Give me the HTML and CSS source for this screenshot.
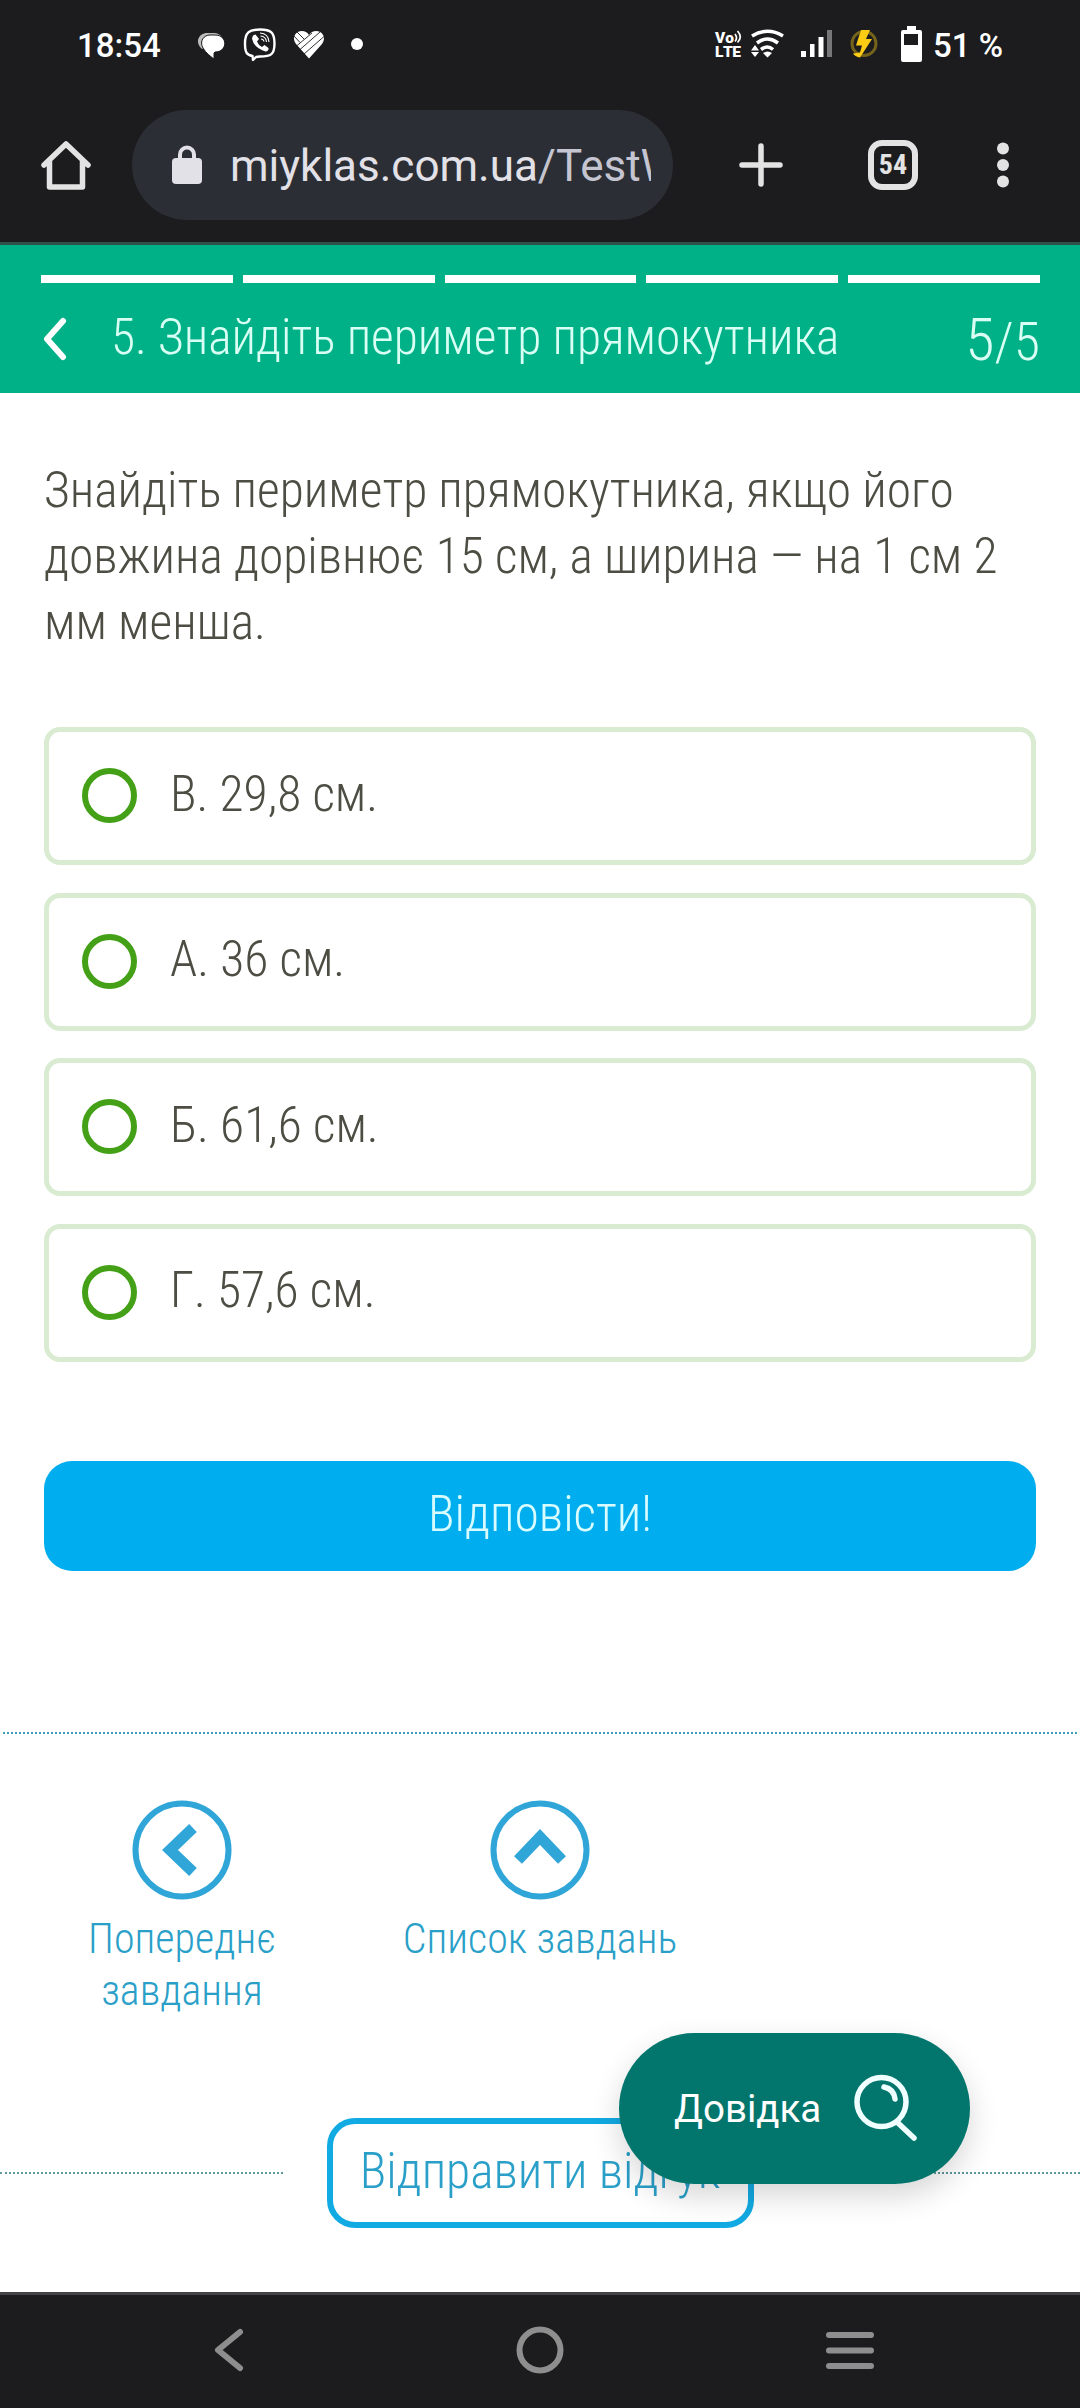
FILE: index.html
```html
<!DOCTYPE html>
<html lang="uk">
  <head>
    <meta charset="UTF-8" />
    <meta name="viewport" content="width=device-width, initial-scale=1.0" />
    <title>5. Знайдіть периметр прямокутника</title>
    <link rel="stylesheet" href="styles.css">
  </head>
  <body>
    <div class="status-bar">
      <span class="time">18:54</span>
      <svg class="notifications" width="180" height="40" viewBox="190 24 180 40">
        <path fill="#bbb" d="M202 49c-8-7-3-16 5-16h6c5 0 8 2 9 5z" />
        <path fill="#fff" stroke="#1c1c1e" stroke-width="1" d="M210 35h5c13 0 13 17 0 17l-1 1v6c-4-3-8-6-11-11-4-7 1-13 7-13z" />
        <path fill="none" stroke="#fff" stroke-width="2.400" stroke-linejoin="round" d="M260 29.500c11 0 14.500 3 14.500 14S271 56.500 260 56.500l-4 .5-3 3-.5-4c-6-1-7.500-4-7.500-12.500 0-11 4-14 15-14z" />
        <path fill="#fff" d="M253 35.500l2.500-1 3.500 4.500-2 2.500q1.500 4 5 5.500l2.500-2 4 3q.500 3-3 3.500-12-4-13.500-13z" />
        <path fill="none" stroke="#fff" stroke-width="1.100" d="M260 33q8.500.500 9 9M260.500 36q5.500.500 6 6M261 39q2.500 0 3 2.500" />
        <path fill="#fff" d="M309 58.500L296 44c-5-7 0-13 6-13 3 0 5 1 7 4 2-3 4-4 7-4 6 0 11 6 6 13z" />
        <path stroke="#1c1c1e" stroke-width=".9" d="M297 32l7 7M294 36l6 6.500M296.500 46L312 33M300 49.500l20-17.500M304 54l20-17.500" />
        <circle cx="357" cy="44" r="6" fill="#fff" />
      </svg>
      <svg class="indicators" width="216" height="40" viewBox="710 24 216 40">
        <text x="715" y="42.500" class="volte" textLength="19">Vo</text>
        <path fill="none" stroke="#fff" stroke-width="1.700" d="M735 34q3 4 0 7.500M737.500 31q5.500 6 0 11.500" />
        <text x="715" y="57" class="volte" textLength="26">LTE</text>
        <g fill="none" stroke="#fff" stroke-width="3.500">
          <path d="M752 36q15.500-9.500 31 0M757 43q10.500-8 21 0M761 49.500q6.500-5 12 0" />
        </g>
        <path fill="#fff" d="M763 53q4.500-3 9 0l-4.500 4.500zM751 50.500l4-5.500 4 5.500zM751 52h8l-4 5z" />
        <path fill="#fff" d="M801 51h5v6h-5zM810 44h4.500v13H810zM818.500 37h5v20h-5z" />
        <path fill="#777" d="M827 30h5v27h-5z" />
        <circle cx="864" cy="43.500" r="12" fill="none" stroke="#74631a" stroke-width="3" />
        <path fill="#fccc14" d="M861 30h9l-4 9h6l-12 18.500q-5-1-7-4l7-1 2-7h-6z" />
        <path fill="#fff" fill-rule="evenodd" d="M907 26h9v4h4q2 0 2 2v28q0 2-2 2h-17q-2 0-2-2V32q0-2 2-2h4zM904 34v11h14V34z" />
      </svg>
      <span class="battery">51 %</span>
    </div>

    <div class="browser-bar">
      <svg class="home" width="50" height="50" viewBox="0 0 50 50">
        <path d="M3 25L25 4l22 21M8.500 21v26h33V21" />
      </svg>
      <div class="address">
        <svg width="30" height="39" viewBox="0 0 30 39">
          <path fill="none" stroke="#e3e1e8" stroke-width="4" d="M8 15V9.500a7 7 0 0 1 14 0V15" />
          <rect y="13" width="30" height="26" rx="4" fill="#e3e1e8" />
        </svg>
        <div class="url">miyklas.com.ua<span>/TestW</span></div>
      </div>
      <svg class="plus" width="44" height="44" viewBox="0 0 44 44">
        <path d="M22 3v38M3 22h38" />
      </svg>
      <div class="tabs">54</div>
      <svg class="dots" width="12" height="46" viewBox="0 0 12 46">
        <circle cx="6" cy="6.500" r="6" />
        <circle cx="6" cy="23" r="6" />
        <circle cx="6" cy="39.500" r="6" />
      </svg>
    </div>

    <header class="test-header">
      <div class="steps">
        <i></i>
        <i></i>
        <i></i>
        <i></i>
        <i></i>
      </div>
      <div class="test-title">
        <svg width="24" height="44" viewBox="0 0 24 44">
          <path d="M20 4L4 22l16 18" />
        </svg>
        <h1>5. Знайдіть периметр прямокутника</h1>
        <div class="counter"><b>5</b>/5</div>
      </div>
    </header>

    <main class="task">
      <p class="question">Знайдіть периметр прямокутника, якщо його<br>довжина дорівнює 15 см, а ширина — на 1 см 2<br>мм менша.</p>
      <div class="answers">
        <label class="answer"><span class="radio"></span>В. 29,8 см.</label>
        <label class="answer"><span class="radio"></span>А. 36 см.</label>
        <label class="answer"><span class="radio"></span>Б. 61,6 см.</label>
        <label class="answer"><span class="radio"></span>Г. 57,6 см.</label>
      </div>
      <button class="submit">Відповісти!</button>
    </main>

    <nav class="task-nav">
      <a class="nav-item">
        <svg width="100" height="100" viewBox="0 0 100 100">
          <circle cx="50" cy="50" r="46.500" />
          <path d="M61 28L38 50l23 22" />
        </svg>
        <span>Попереднє<br>завдання</span>
      </a>
      <a class="nav-item">
        <svg width="100" height="100" viewBox="0 0 100 100">
          <circle cx="50" cy="50" r="46.500" />
          <path d="M28 60l22-23 22 23" />
        </svg>
        <span>Список завдань</span>
      </a>
    </nav>

    <div class="feedback">
      <div class="line"></div>
      <button class="feedback-btn">Відправити відгук</button>
      <div class="line"></div>
      <div class="help">
        <span>Довідка</span>
        <svg width="64" height="68" viewBox="0 0 64 68">
          <circle cx="27.500" cy="28" r="24.500" />
          <path d="M44 49l16 15M30 13q10 2 11 12" />
        </svg>
      </div>
    </div>

    <div class="system-nav">
      <svg width="50" height="50" viewBox="0 0 50 50">
        <path d="M35 7L13 25l22 18" />
      </svg>
      <svg width="50" height="50" viewBox="0 0 50 50">
        <circle cx="25" cy="25" r="20.500" />
      </svg>
      <svg width="50" height="50" viewBox="0 0 50 50">
        <path d="M4 10h42M4 25.500h42M4 41h42" />
      </svg>
    </div>
  </body>
</html>
```
FILE: styles.css
```css
* {
  box-sizing: border-box;
}
body {
  margin: 0;
  width: 1080px;
  height: 2408px;
  display: flex;
  flex-direction: column;
  background-color: #fff;
  font-family: "Roboto Condensed", Roboto, sans-serif;
  font-stretch: 75%;
  font-weight: 300;
  font-size: 49.500px;
  font-kerning: none;
  color: #4d4d43;
  overflow: hidden;
}
svg {
  display: block;
  flex: none;
}
button {
  font: inherit;
  padding: 0;
}
.status-bar {
  display: flex;
  align-items: center;
  height: 90px;
  padding-left: 77px;
  background-color: #1c1c1e;
  color: #fff;
  font-family: Roboto, sans-serif;
  font-stretch: 100%;
  font-weight: 500;
  font-size: 33px;
}
.time {
  width: 113px;
}
.notifications {
  margin-bottom: 2px;
}
.indicators {
  margin-left: 340px;
  margin-bottom: 2px;
}
.battery {
  margin-left: 7px;
  white-space: nowrap;
}
.volte {
  fill: #fff;
  font-size: 15.500px;
  font-weight: 900;
}
.browser-bar {
  display: flex;
  align-items: center;
  height: 155px;
  padding: 0 71px 3px 41px;
  background-color: #1c1c1e;
  border-bottom: 3px solid #30504a;
  fill: none;
  stroke: #e3e3e3;
  stroke-width: 5.500;
  stroke-linecap: round;
  stroke-linejoin: round;
}
.address {
  display: flex;
  align-items: center;
  width: 541px;
  height: 110px;
  margin-left: 41px;
  padding: 0 22px 0 40px;
  border-radius: 55px;
  background-color: #2c2e35;
  stroke: none;
}
.url {
  flex: 1;
  margin: 3px 0 0 28px;
  overflow: hidden;
  white-space: nowrap;
  font-family: Roboto, sans-serif;
  font-stretch: 100%;
  font-weight: 400;
  font-size: 44px;
  font-kerning: normal;
  color: #e3e1e8;
}
.url span {
  color: #c4c5d0;
}
.plus {
  margin-left: 66px;
}
.tabs {
  width: 50px;
  height: 50px;
  margin-left: 85px;
  border: 6px solid #e3e3e3;
  border-radius: 14px;
  text-align: center;
  font-weight: 700;
  font-size: 28px;
  line-height: 38px;
  color: #e3e3e3;
}
.dots {
  margin-left: 79px;
  fill: #e3e3e3;
  stroke: none;
}
.test-header {
  height: 148px;
  padding: 30px 40px 0 41px;
  background-color: #00b188;
  color: #d9fff4;
}
.steps {
  display: flex;
  gap: 10px;
}
.steps i {
  flex: 1;
  height: 8px;
  background-color: #fff;
}
.test-title {
  display: flex;
  align-items: center;
  height: 112px;
}
.test-title svg {
  margin-left: 2px;
  fill: none;
  stroke: #fff;
  stroke-width: 6;
  stroke-linecap: round;
  stroke-linejoin: round;
}
.test-title h1 {
  margin: 0 0 4px 44px;
  font-weight: 300;
  font-size: 49.500px;
  white-space: nowrap;
}
.counter {
  margin-left: auto;
  font-size: 54px;
}
.counter b {
  font-weight: 300;
  font-size: 60px;
}
.task {
  padding: 64px 44px 0;
}
.question {
  margin: 0;
  line-height: 66px;
  white-space: nowrap;
}
.answers {
  display: grid;
  gap: 27.600px;
  margin-top: 72px;
}
.answer {
  display: flex;
  align-items: center;
  height: 138px;
  padding: 0 33px 5px;
  border: 5px solid #d9ecd2;
  border-radius: 16px;
}
.radio {
  width: 55px;
  height: 55px;
  margin: 4px 33px 0 0;
  border: 6px solid #43a017;
  border-radius: 50%;
}
.submit {
  display: block;
  width: 992px;
  height: 110px;
  margin-top: 99px;
  padding-bottom: 4px;
  border: 0;
  border-radius: 28px;
  background-color: #00aeef;
  color: #d8fcff;
}
.task-nav {
  display: flex;
  height: 386px;
  margin: 161px 3px 0;
  padding-top: 66px;
  border-top: 2px dotted #3c9fb8;
}
.nav-item {
  display: flex;
  flex-direction: column;
  align-items: center;
  width: 358px;
  font-size: 42px;
  line-height: 52px;
  text-align: center;
  color: #2a9fc8;
}
.nav-item svg {
  margin-bottom: 13px;
  fill: none;
  stroke: #30a6d8;
}
.nav-item circle {
  stroke-width: 6;
}
.nav-item path {
  stroke-width: 11;
}
.feedback {
  position: relative;
  display: flex;
  align-items: center;
  justify-content: space-between;
  height: 110px;
}
.line {
  width: 283px;
  border-top: 2px dotted #5c9a9c;
}
.feedback-btn {
  width: 427px;
  height: 110px;
  padding-bottom: 4px;
  border: 6px solid #12aae2;
  border-radius: 28px;
  background-color: #fff;
  color: #2a9fc8;
}
/* floating help button */
.help {
  position: absolute;
  left: 619px;
  top: -85px;
  display: flex;
  align-items: center;
  width: 351px;
  height: 151px;
  padding-left: 55px;
  border-radius: 76px;
  background-color: #02766d;
  box-shadow: 0 12px 30px rgba(0, 0, 0, 0.16);
  font-family: Roboto, sans-serif;
  font-stretch: 100%;
  font-weight: 400;
  font-size: 38.500px;
  color: #fff;
}
.help span {
  width: 180px;
}
.help svg {
  fill: none;
  stroke: #f0ffff;
  stroke-width: 5.500;
  stroke-linecap: round;
}
.system-nav {
  display: flex;
  align-items: center;
  justify-content: space-between;
  height: 116px;
  margin-top: auto;
  padding: 0 205px 3px 205px;
  border-top: 3px solid #434345;
  background-color: #1c1c1e;
  fill: none;
  stroke: #8e8e8f;
  stroke-width: 6;
  stroke-linecap: round;
  stroke-linejoin: round;
}
```
